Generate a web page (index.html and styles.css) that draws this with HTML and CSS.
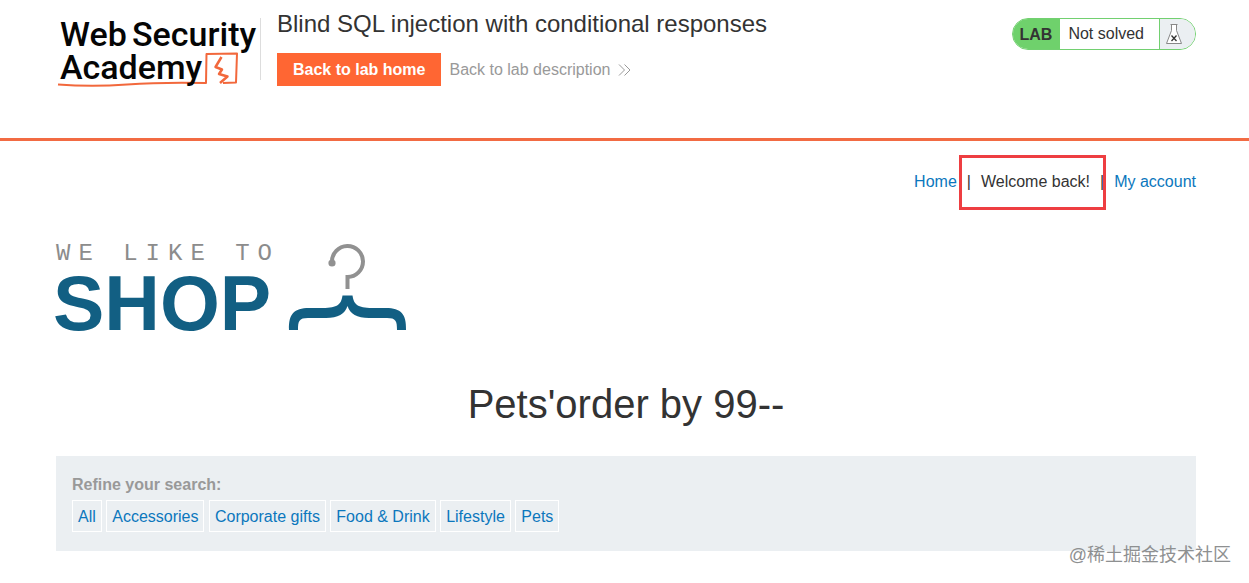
FILE: index.html
```html
<!DOCTYPE html>
<html lang="en">
<head>
<meta charset="utf-8">
<title>Blind SQL injection with conditional responses</title>
<link rel="stylesheet" href="styles.css">
</head>
<body>
<header class="lab-header">
  <a class="academy-logo" href="#" aria-label="Web Security Academy">
    <svg width="203" height="78" viewBox="0 0 203 78">
      <g fill="none" stroke="#f2683c" stroke-width="2" stroke-linejoin="round">
        <path d="M1 74.500Q35 77 70 74.500T149 73L149.500 44L180 43.500L179 72.500L166 73"/>
        <path d="M164.500 47L158.500 57L165 59.500L162 64L170.500 66.500L163 73" stroke-width="2.500"/>
      </g>
      <g class="academy-name">
        <text x="3" y="36">Web</text>
        <text x="75" y="36">Security</text>
        <text x="3" y="69">Academy</text>
      </g>
    </svg>
  </a>
  <div class="lab-title">
    <h2>Blind SQL injection with conditional responses</h2>
    <div class="lab-links">
      <a class="lab-home" href="#">Back to lab home</a>
      <a class="lab-description" href="#">Back to lab description
        <svg width="13" height="12" viewBox="0 0 13 12" fill="none" stroke="#999" aria-hidden="true"><path d="M1 .5L6.500 6L1 11.500M6.500 .5L12 6L6.500 11.500"/></svg>
      </a>
    </div>
  </div>
  <div class="lab-status">
    <strong>LAB</strong>
    <span class="status-text">Not solved</span>
    <span class="status-icon">
      <svg width="16" height="20" viewBox="0 0 16 20" fill="none" stroke="#888" aria-hidden="true"><path d="M4.500 .5H11.500M5.500 .5V6.500L.5 19.500H15.500L10.500 6.500V.5" fill="#fff"/><path d="M5.500 11.500L10.500 17M10.500 11.500L5.500 17" stroke="#333" stroke-width="1.300"/></svg>
    </span>
  </div>
</header>
<main class="page">
  <nav class="top-links">
    <a href="#">Home</a><span>|</span><span>Welcome back!</span><span>|</span><a href="#">My account</a>
    <div class="highlight"></div>
  </nav>
  <svg class="shop-logo" width="352" height="96" viewBox="0 0 352 96" role="img" aria-label="We like to shop">
    <text class="shop-tagline" x="0" y="21">WE LIKE TO</text>
    <text class="shop-name" x="-3" y="91">SHOP</text>
    <path d="M276 23A15.500 15.500 0 1 1 291.500 38V50" fill="none" stroke="#919191" stroke-width="4"/>
    <circle cx="276" cy="24" r="3.600" fill="#919191"/>
    <path d="M286.500 56.500H296.500C298 67 303 69 319 69H330C345 69 350.500 75 350 91H341C341 82 340 79 331 79H313C301 79 294 75 291.500 67C289 75 282 79 270 79H252C243 79 242 82 242 91H233C232.500 75 238 69 253 69H264C280 69 285 67 286.500 56.500Z" fill="#125f83"/>
  </svg>
  <h1>Pets'order by 99--</h1>
  <section class="filters">
    <strong>Refine your search:</strong>
    <div class="filter-list">
      <a href="#">All</a>
      <a href="#">Accessories</a>
      <a href="#">Corporate gifts</a>
      <a href="#">Food &amp; Drink</a>
      <a href="#">Lifestyle</a>
      <a href="#">Pets</a>
    </div>
  </section>
</main>
<div class="watermark">@稀土掘金技术社区</div>
</body>
</html>
```
FILE: styles.css
```css
* {
  box-sizing: border-box;
}

body {
  position: relative;
  margin: 0;
  min-height: 100vh;
  background: #fff;
  color: #333;
  font: 16px/24px "Liberation Sans", Arial, sans-serif;
}

a {
  color: #0b77bd;
  text-decoration: none;
}

h1,
h2 {
  margin: 0;
  font-weight: 400;
}

.lab-header {
  display: flex;
  align-items: flex-start;
  padding: 10px 53px 50px 57px;
  border-bottom: 3px solid #f26b43;
}

.academy-logo {
  display: flex;
}

.academy-logo::after {
  content: "";
  align-self: center;
  width: 1px;
  height: 62px;
  background: #ddd;
}

.academy-name {
  fill: #050505;
  font-family: Roboto, sans-serif;
  font-size: 34px;
  font-weight: 500;
}

.lab-title {
  flex: 1;
  padding-left: 16px;
}

h2 {
  font-size: 24px;
  line-height: 28px;
}

.lab-links {
  display: flex;
  align-items: center;
  gap: 8px;
  margin-top: 15px;
}

.lab-home {
  padding: 5px 16px 4px;
  background: #ff6633;
  color: #fff;
  font-weight: 700;
}

.lab-description {
  display: flex;
  align-items: center;
  gap: 8px;
  color: #999;
}

.lab-status {
  display: flex;
  height: 32px;
  margin-top: 8px;
  overflow: hidden;
  border: 1px solid #72d070;
  border-radius: 16px;
  line-height: 30px;
}

.lab-status strong {
  padding: 1px 8px 0 7px;
  background: #6fd16c;
}

.status-text {
  padding: 0 15px 0 8px;
}

.status-icon {
  display: flex;
  align-items: center;
  padding: 0 13px 0 6px;
  border-left: 1px solid #72d070;
  background: #ebeff2;
}

.page {
  padding: 29px 53px 32px 56px;
}

.top-links {
  position: relative;
  display: flex;
  justify-content: flex-end;
  gap: 10px;
}

.highlight {
  position: absolute;
  top: -15px;
  right: 90px;
  width: 147px;
  height: 55px;
  border: 3px solid #ee3e41;
}

.shop-logo {
  display: block;
  margin-top: 45px;
  overflow: visible;
}

.shop-tagline {
  fill: #8c8c8c;
  font: 24px "Liberation Mono", monospace;
  letter-spacing: 8px;
}

.shop-name {
  fill: #125f83;
  font: 700 77px "Liberation Sans", Arial, sans-serif;
}

h1 {
  margin-top: 45px;
  font-size: 40px;
  line-height: 48px;
  text-align: center;
}

.filters {
  margin-top: 28px;
  padding: 17px 16px 19px;
  background: #ebeff2;
}

.filters strong {
  color: #999;
}

.filter-list {
  margin-top: 3px;
}

.filter-list a {
  display: inline-block;
  padding: 4px 5px 2px;
  border: 1px solid #fff;
}

.watermark {
  position: absolute;
  right: 18px;
  bottom: 16px;
  color: #8e9091;
  font: 18px/24px "Liberation Sans", "Noto Sans CJK SC", sans-serif;
}
```
